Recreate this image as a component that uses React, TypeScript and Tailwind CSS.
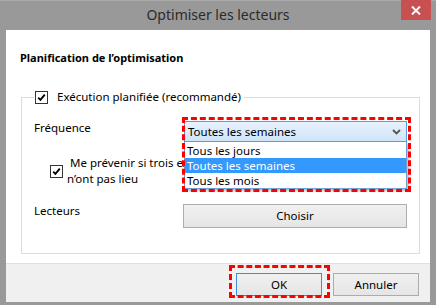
import React from 'react'

const FONT = { fontFamily: '"Noto Sans", "Open Sans", sans-serif' }

function Check() {
  return (
    <span className="flex h-[13px] w-[13px] shrink-0 items-center justify-center border border-[#333] bg-white">
      <svg width="9" height="9" viewBox="0 0 9 9">
        <path d="M1.2 4.6 L3.4 6.8 L7.8 1.6" fill="none" stroke="#000" strokeWidth="1.9" />
      </svg>
    </span>
  )
}

export default function App() {
  return (
    <div className="flex h-[305px] w-[436px] flex-col bg-[#999999] text-black" style={FONT}>
      {/* Title bar */}
      <div className="flex h-[30px] shrink-0 border-t border-[#a9a9a9]">
        <div className="w-[35px]" />
        <div className="flex flex-1 items-center justify-center pb-[2px] text-[14px] text-[#2b2b2b]">
          Optimiser les lecteurs
        </div>
        <div className="mr-[5px] -mt-[1px] flex h-[20px] w-[30px] items-center justify-center bg-[#c75050]">
          <svg width="10" height="9" viewBox="0 0 10 9">
            <path d="M1 0.5 L9 8.5 M9 0.5 L1 8.5" stroke="#fff" strokeWidth="2" />
          </svg>
        </div>
      </div>

      {/* Client area */}
      <div className="mx-[6px] mb-[3px] flex flex-1 flex-col bg-white">
        <div className="flex-1 pl-[14px] pt-[20px]">
          <div className="text-[11px] font-bold leading-[16px]">Planification de l’optimisation</div>

          <fieldset className="ml-[1px] mr-[10px] mt-[23px] border border-[#dcdcdc] pb-[25px] pl-[12px] pr-[12px]">
            <legend className="flex items-center pl-[1px] pr-[3px] text-[11.5px] leading-[16px]">
              <Check />
              <span className="ml-[9px]">Exécution planifiée (recommandé)</span>
            </legend>

            {/* Fréquence */}
            <div className="mt-[15px] flex items-start text-[11.5px] leading-[16px]">
              <div className="w-[150px] shrink-0">Fréquence</div>
              <div className="relative z-10 mt-[1px] flex-1">
                <div className="flex h-[21px] items-center justify-between border border-[#569de5] bg-gradient-to-b from-[#e8f2fc] to-[#cfe5f9] pl-[3px] pr-[5px] text-[11.5px]">
                  <span>Toutes les semaines</span>
                  <svg width="9" height="6" viewBox="0 0 9 6">
                    <path d="M1 1 L4.5 4.5 L8 1" fill="none" stroke="#555" strokeWidth="1.8" />
                  </svg>
                </div>
                <div className="absolute left-0 right-0 top-full border border-t-0 border-[#6e9fd4] bg-white pt-[1px] text-[11.5px] leading-[15px] shadow-[2px_2px_2px_rgba(0,0,0,0.25)]">
                  <div className="pl-[2px]">Tous les jours</div>
                  <div className="bg-[#3399ff] pl-[2px] text-white">Toutes les semaines</div>
                  <div className="pl-[2px]">Tous les mois</div>
                </div>
                <div className="pointer-events-none absolute -left-[2px] -top-[4px] h-[75px] w-[229px] border-[3px] border-dashed border-[#ff0000]" />
              </div>
            </div>

            {/* Notification */}
            <div className="mt-[13px] flex items-start pl-[16px] text-[11.5px] leading-[16px]">
              <div className="mt-[10px]">
                <Check />
              </div>
              <div className="ml-[4px] whitespace-nowrap">
                <div className="indent-[3px]">Me prévenir si trois exécutions planifiées consécutives</div>
                <div>n’ont pas lieu</div>
              </div>
            </div>

            {/* Lecteurs */}
            <div className="mt-[16px] flex items-start text-[11.5px] leading-[16px]">
              <div className="w-[149px] shrink-0">Lecteurs</div>
              <button className="mt-[1px] h-[24px] flex-1 border border-[#adadad] bg-gradient-to-b from-[#f0f0f0] to-[#e5e5e5]">
                Choisir
              </button>
            </div>
          </fieldset>
        </div>

        {/* Footer */}
        <div className="flex h-[39px] shrink-0 items-start justify-end gap-[11px] border-t border-[#dfdfdf] bg-[#f0f0f0] pr-[11px] pt-[9px] text-[11.5px]">
          <div className="relative">
            <button className="h-[23px] w-[86px] border border-[#3c8ee0] bg-gradient-to-b from-[#f0f0f0] to-[#e5e5e5]">OK</button>
            <div className="pointer-events-none absolute -left-[7px] -top-[8px] h-[33px] w-[101px] border-[3px] border-dashed border-[#ff0000]" />
          </div>
          <button className="h-[23px] w-[86px] border border-[#acacac] bg-gradient-to-b from-[#f0f0f0] to-[#e5e5e5]">Annuler</button>
        </div>
      </div>
    </div>
  )
}
